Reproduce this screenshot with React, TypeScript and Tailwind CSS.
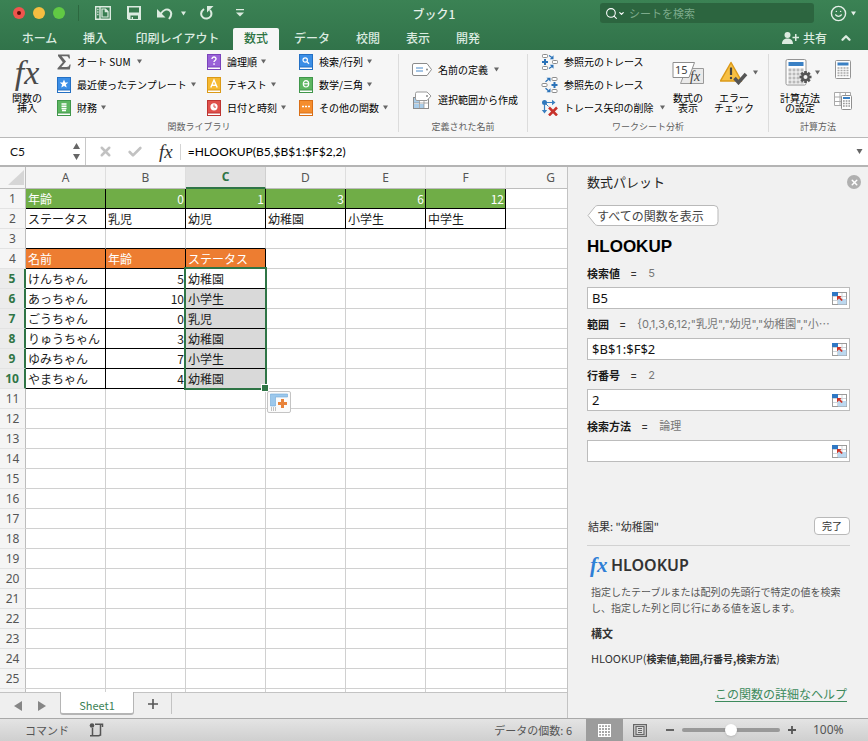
import React, { useState } from 'react';
import { ChevronDown, ChevronUp, Search, X, Check, Smile } from 'lucide-react';

const COLUMNS = ['A', 'B', 'C', 'D', 'E', 'F', 'G'];

const CELLS: Record<number, string[]> = {
  1: ['年齢', '0', '1', '3', '6', '12'],
  2: ['ステータス', '乳児', '幼児', '幼稚園', '小学生', '中学生'],
  4: ['名前', '年齢', 'ステータス'],
  5: ['けんちゃん', '5', '幼稚園'],
  6: ['あっちゃん', '10', '小学生'],
  7: ['ごうちゃん', '0', '乳児'],
  8: ['りゅうちゃん', '3', '幼稚園'],
  9: ['ゆみちゃん', '7', '小学生'],
  10: ['やまちゃん', '4', '幼稚園'],
};

const TABS = [
  { label: 'ホーム', cls: 'w-[57px]' },
  { label: '挿入', cls: 'w-[54px]' },
  { label: '印刷レイアウト', cls: 'w-[111px]' },
  { label: '数式', cls: 'w-[46px]' },
  { label: 'データ', cls: 'w-[66px]' },
  { label: '校閲', cls: 'w-[46px]' },
  { label: '表示', cls: 'w-[54px]' },
  { label: '開発', cls: 'w-[46px]' },
];

const Caret = ({ className = '' }: { className?: string }) => (
  <svg viewBox="0 0 6 5" className={`w-[5px] h-[5px] shrink-0 fill-[#666] ${className}`}>
    <path d="M0 0h6L3 5z" />
  </svg>
);

const FxIcon = ({ className = '' }: { className?: string }) => (
  <span aria-hidden="true" className={`font-['Liberation_Serif',serif] italic leading-none ${className}`}>
    fx
  </span>
);

const BookIcon = ({ color, edge, children }: { color: string; edge: string; children: React.ReactNode }) => (
  <svg viewBox="0 0 14 16" className="w-[14px] h-4 shrink-0">
    <rect x="0.5" y="0.5" width="13" height="15" fill="#fff" stroke={edge} />
    <rect x="0.5" y="0.5" width="13" height="12.5" fill={color} stroke={edge} />
    {children}
  </svg>
);

const SigmaIcon = () => (
  <svg viewBox="0 0 14 16" className="w-[14px] h-4 shrink-0">
    <path d="M1 .5h11.5l.5 4h-1.2c-.4-1.700-1-2.300-2.800-2.300H4.600L9 7.600 4.300 13h5.200c1.800 0 2.600-.8 3.100-2.500h1.100l-.9 5H.5v-1.300l5.300-6L1 2z" fill="#666" />
  </svg>
);

const StarIcon = () => (
  <BookIcon color="#3b8ee6" edge="#2470c4">
    <path d="M7 2.500l1.200 2.900 3.100.2-2.400 2 .8 3L7 9 4.300 10.600l.8-3-2.400-2 3.100-.2z" fill="#fff" />
  </BookIcon>
);

const CoinsIcon = () => (
  <BookIcon color="#5cb560" edge="#40964a">
    <path d="M4.500 4h5M4.500 6.300h5M4.500 8.600h5M5 10.500h4" stroke="#fff" strokeWidth="1.500" />
  </BookIcon>
);

const LogicIcon = () => (
  <BookIcon color="#9a62d8" edge="#7a43bb">
    <path d="M5 5c0-2.800 4.200-2.600 4 0-.1 1.400-2 1.500-2 3" fill="none" stroke="#fff" strokeWidth="1.400" />
    <rect x="6.300" y="9.300" width="1.500" height="1.500" fill="#fff" />
  </BookIcon>
);

const TextIcon = () => (
  <BookIcon color="#f6b932" edge="#db9a17">
    <path d="M3.800 10.500L7 3l3.200 7.500M5 8.200h4" fill="none" stroke="#fff" strokeWidth="1.400" />
  </BookIcon>
);

const ClockIcon = () => (
  <BookIcon color="#e0514c" edge="#bd3532">
    <circle cx="7" cy="6.800" r="3.600" fill="#fff" />
    <path d="M7 4.500v2.600h2" fill="none" stroke="#e0514c" />
  </BookIcon>
);

const LookupIcon = () => (
  <BookIcon color="#3b8ee6" edge="#2470c4">
    <circle cx="6.200" cy="6" r="2.200" fill="none" stroke="#fff" strokeWidth="1.200" />
    <path d="M8 7.800l2 2" stroke="#fff" strokeWidth="1.300" />
  </BookIcon>
);

const ThetaIcon = () => (
  <BookIcon color="#5cb560" edge="#40964a">
    <ellipse cx="7" cy="6.800" rx="2.700" ry="3.200" fill="none" stroke="#fff" strokeWidth="1.200" />
    <path d="M4.500 6.800h5" stroke="#fff" strokeWidth="1.200" />
  </BookIcon>
);

const MoreIcon = () => (
  <BookIcon color="#f58d2d" edge="#d96f17">
    <path d="M3 6.500h2M6 6.500h2M9 6.500h2" stroke="#fff" strokeWidth="1.600" />
  </BookIcon>
);

const TagIcon = () => (
  <svg viewBox="0 0 20 13" className="w-5 h-[13px] shrink-0">
    <path d="M2 .5h13l4.500 6-4.500 6H2A1.500 1.500 0 0 1 .5 11V2A1.500 1.500 0 0 1 2 .5z" fill="#fff" stroke="#8b8b8b" />
    <path d="M4 5h7M4 8h7" stroke="#4a8ac9" />
    <circle cx="15" cy="6.500" r="1" fill="#888" />
  </svg>
);

const SelectionTagIcon = () => (
  <svg viewBox="0 0 20 18" className="w-5 h-[18px] shrink-0">
    <rect x="1.500" y="6.500" width="15" height="11" fill="#fff" stroke="#8b8b8b" />
    <path d="M2 7h5v5H2zM2 13h5v4H2zM8 13h4v4H8z" fill="#a9cdea" />
    <path d="M2 12h14M7.500 7v10M12 7v10" stroke="#8b8b8b" strokeWidth=".7" />
    <path d="M5 1h10l4 4-4 4.500H5A1.500 1.500 0 0 1 3.500 8V2.500A1.500 1.500 0 0 1 5 1z" fill="#fff" stroke="#999" />
    <circle cx="15" cy="5" r="1" fill="#888" />
  </svg>
);

const PrecedentsIcon = () => (
  <svg viewBox="0 0 17 16" className="w-[17px] h-4 shrink-0">
    <g fill="#fff" stroke="#8b8b8b">
      <rect x="1.500" y=".5" width="5" height="3" rx=".8" />
      <rect x="1.500" y="12.500" width="5" height="3" rx=".8" />
      <rect x="11.500" y="6.500" width="5" height="3" rx=".8" />
    </g>
    <path d="M4 5v6M1 8h6" stroke="#2a72b8" strokeWidth="2" />
    <path d="M8 1.500l3 2M8 14.500l3-2" stroke="#2a72b8" strokeWidth="1.300" />
    <path d="M12.500 1.200v4H8.800zM12.500 14.800v-4H8.800z" fill="#2a72b8" />
  </svg>
);

const DependentsIcon = () => (
  <svg viewBox="0 0 17 16" className="w-[17px] h-4 shrink-0">
    <g fill="#fff" stroke="#8b8b8b">
      <rect x="11" y=".5" width="5" height="3" rx=".8" />
      <rect x="11" y="12.500" width="5" height="3" rx=".8" />
      <rect x="1" y="6.500" width="5" height="3" rx=".8" />
    </g>
    <path d="M13.500 5v6M10.500 8h6" stroke="#2a72b8" strokeWidth="2" />
    <path d="M4.500 4.800l3-2.500M4.500 11.200l3 2.500" stroke="#2a72b8" strokeWidth="1.300" />
    <path d="M5.500.800h4v4zM5.500 15.200h4v-4z" fill="#2a72b8" />
  </svg>
);

const RemoveArrowsIcon = () => (
  <svg viewBox="0 0 17 17" className="w-[17px] h-[17px] shrink-0">
    <path d="M3.500 3.500h8M3.500 3.500v8" stroke="#3a80c0" strokeWidth="1.200" />
    <path d="M11 .8l3.500 2.700L11 6.200zM.8 11l2.700 3.500L6.200 11z" fill="#3a80c0" />
    <path d="M4 4l3.500 3.500" stroke="#3a80c0" />
    <circle cx="3.500" cy="3.500" r="2.500" fill="#2f78bd" />
    <path d="M8 8.500l8 8M16 8.500l-8 8" stroke="#c8322b" strokeWidth="2.500" />
  </svg>
);

const ShowFormulasIcon = () => (
  <svg viewBox="0 0 32 23" className="w-8 h-[23px]">
    <path d="M14.500 6.500h17v15H8.500z" fill="#eaeaea" stroke="#9a9a9a" strokeLinejoin="round" />
    <path d="M1 .5h21.500l-5.500 15H1z" fill="#fff" stroke="#8e8e8e" strokeLinejoin="round" />
    <text x="3" y="12" fontSize="11" fill="#444" fontFamily="Noto Sans">15</text>
    <text x="18" y="19" fontSize="14" fontStyle="italic" fill="#444" fontFamily="Liberation Serif">fx</text>
  </svg>
);

const ErrorCheckIcon = () => (
  <svg viewBox="0 0 28 24" className="w-7 h-6">
    <path d="M11 1.500L21.500 20h-21z" fill="#f7c044" stroke="#dc9a1a" strokeWidth="1.500" strokeLinejoin="round" />
    <path d="M11 6.500v7.500" stroke="#444" strokeWidth="2.200" />
    <circle cx="11" cy="17" r="1.200" fill="#444" />
    <path d="M14.500 17l4 4.500 7.500-8.500" fill="none" stroke="#555" strokeWidth="3.500" />
  </svg>
);

const CalculatorIcon = () => (
  <svg viewBox="0 0 16 19" className="w-4 h-[19px]">
    <rect x=".5" y=".5" width="15" height="18" rx="1" fill="#fdfdfd" stroke="#949494" />
    <rect x="2.500" y="2.500" width="11" height="3" fill="#3a80c4" />
    <path d="M2.500 8h11M2.500 10.500h11M2.500 13h11M2.500 15.500h11" stroke="#a8a8a8" strokeWidth="1.700" strokeDasharray="2 1" />
  </svg>
);

const GEAR_ANGLES = [0, 45, 90, 135];

const CalcOptionsIcon = () => (
  <svg viewBox="0 0 27 27" className="w-[27px] h-[27px]">
    <rect x="1" y=".5" width="20" height="25.500" rx="1.500" fill="#fdfdfd" stroke="#949494" />
    <rect x="3.500" y="3" width="15" height="4" fill="#3a80c4" />
    <path d="M3.500 11h15M3.500 15h15M3.500 19h15M3.500 23h15" stroke="#b9b9b9" strokeWidth="2.800" strokeDasharray="3 1" />
    {GEAR_ANGLES.map((angle) => (
      <path key={angle} d="M20.500 12v12" stroke="#555" strokeWidth="2.600" transform={`rotate(${angle} 20.500 18)`} />
    ))}
    <circle cx="20.500" cy="18" r="3.200" fill="#f5f5f5" stroke="#555" strokeWidth="2.400" />
  </svg>
);

const CalcSheetIcon = () => (
  <svg viewBox="0 0 18 18" className="w-[18px] h-[18px]">
    <path d="M.5.500h16v13H.5zM.5 5h16M.5 9.500h16M6 .5v13M11.500.500v13" fill="#fff" stroke="#a9a9a9" />
    <rect x="7.500" y="3.500" width="10" height="14" rx="1" fill="#fff" stroke="#8f8f8f" />
    <rect x="9" y="5" width="7" height="2" fill="#3a80c4" />
    <path d="M9 9h7M9 11.500h7M9 14h7" stroke="#999" strokeWidth="1.500" strokeDasharray="1.700 1" />
  </svg>
);

const PickRangeIcon = () => (
  <svg viewBox="0 0 15 13" className="w-[15px] h-[13px]">
    <rect x=".5" y=".5" width="14" height="12" fill="#fff" stroke="#9b9b9b" />
    <path d="M1 4.500h13M1 8.500h13M5.500 1v11M10 1v11" stroke="#cfd5da" />
    <rect x="0" y="0" width="6" height="4" fill="#2f78c4" />
    <rect x="6" y="7" width="8.500" height="5.500" fill="#bcd8ef" />
    <path d="M5 4h4.500L8.300 5.300l2.500 2.600-1.300 1.200L7 6.600 5 8.300z" fill="#cb3428" />
  </svg>
);

const MenuItem = ({ icon, label, caret = true, far = false }: { icon: React.ReactNode; label: string; caret?: boolean; far?: boolean }) => (
  <button className="flex items-center gap-[6px] h-[23px] whitespace-nowrap">
    {icon}
    <span>{label}</span>
    {caret && <Caret className={far ? 'ml-0' : '-ml-[2px]'} />}
  </button>
);

// a caption broken over two lines, for the large ribbon buttons
const Caption = ({ lines }: { lines: string[] }) => (
  <span className="flex flex-col items-center h-5 whitespace-nowrap">
    {lines.map((line) => (
      <span key={line} className="h-[10px]">{line}</span>
    ))}
  </span>
);

const GroupLabel = ({ children }: { children: React.ReactNode }) => (
  <div className="text-center text-[9px] leading-4 text-[#5e5e5e] whitespace-nowrap">{children}</div>
);

const TitleBar: React.FC = () => (
  <div className="relative flex items-center h-[26px] pl-[13px] pr-3">
    <div className="flex gap-2">
      <button aria-label="閉じる" className="w-3 h-3 rounded-full bg-[#f0544d] flex items-center justify-center">
        <span className="w-1 h-1 rounded-full bg-[#5c0d08]" />
      </button>
      <button aria-label="しまう" className="w-3 h-3 rounded-full bg-[#f6be41]" />
      <button aria-label="拡大" className="w-3 h-3 rounded-full bg-[#61c944]" />
    </div>
    <div className="w-px h-4 ml-[13px] bg-[#2c683f]" />
    <div className="flex items-center ml-4 text-[#dcebe0]">
      <button aria-label="テンプレート">
        <svg viewBox="0 0 16 14" className="w-4 h-[14px]" fill="none" stroke="currentColor" strokeWidth="1.400">
          <path d="M.7.700h14.600v12.600H.7zM5 1v12" />
          <path d="M2.200 3.500h1.300M2.200 6h1.300M2.200 8.500h1.300" />
          <path d="M7 3h3.500L13 5.500V11H7zM10.300 3v2.700H13" strokeWidth="1.200" />
        </svg>
      </button>
      <button aria-label="保存" className="ml-4">
        <svg viewBox="0 0 14 14" className="w-[14px] h-[14px]">
          <path d="M0 0h14v14H1.500L0 12.500z" fill="currentColor" />
          <path d="M2 1.500h10v5H2zM3.500 9.500H11V13H6v-2H4.700v2H3.500z" fill="#387a4e" />
        </svg>
      </button>
      <button aria-label="元に戻す" className="flex items-center gap-2 ml-4">
        <svg viewBox="0 0 16 13" className="w-4 h-[13px]">
          <path d="M0 2v8.500h8.500z" fill="currentColor" />
          <path d="M3.500 7C7 2 10.500 1.500 12.700 3.500c2.200 2 2 5-.7 8.500" fill="none" stroke="currentColor" strokeWidth="2" />
        </svg>
        <Caret className="fill-[#dcebe0]" />
      </button>
      <button aria-label="やり直し" className="ml-[14px]">
        <svg viewBox="0 0 14 14" className="w-[14px] h-[14px]">
          <path d="M4 3C.5 5.500.300 9.500 3 11.500c2.500 1.800 6 1.300 7.700-1.200C12 8 11.500 6 10 4" fill="none" stroke="currentColor" strokeWidth="2" />
          <path d="M7 0h6.500L7 6.500z" fill="currentColor" />
        </svg>
      </button>
      <button aria-label="カスタマイズ" className="ml-[22px]">
        <svg viewBox="0 0 8 8" className="w-2 h-2" fill="currentColor">
          <path d="M0 0h8v1.300H0zM0 3.500h8L4 7.500z" />
        </svg>
      </button>
    </div>
    <h1 className="absolute left-1/2 -translate-x-1/2 top-[5px] text-[12px] leading-[18px] font-medium text-[#e6f0e9]">ブック1</h1>
    <label className="flex items-center ml-auto w-[214px] h-5 pl-[5px] rounded-[3px] bg-[#2c653f] text-white">
      <Search size={13} strokeWidth={2} />
      <ChevronDown size={7} strokeWidth={4} />
      <input
        aria-label="シートを検索"
        placeholder="シートを検索"
        className="flex-1 min-w-0 ml-1 bg-transparent text-[11px] leading-4 outline-none placeholder:text-[#7cab8b]"
      />
    </label>
    <button aria-label="フィードバック" className="flex items-center gap-1 ml-4 text-[#e6f0e9]">
      <Smile size={17} strokeWidth={2} />
      <Caret className="fill-[#e6f0e9]" />
    </button>
  </div>
);

const TabBar: React.FC = () => (
  <div className="flex items-end h-6 pl-[11px] text-[12px] font-medium text-[#dcebe0]">
    <nav className="flex items-end h-full">
      {TABS.map((tab) => (
        <button
          key={tab.label}
          className={`h-[22px] pb-[2px] leading-5 whitespace-nowrap ${tab.cls} ${
            tab.label === '数式' ? 'bg-[#f6f6f6] text-[#2d7343] rounded-t-[2px]' : ''
          }`}
        >
          {tab.label}
        </button>
      ))}
    </nav>
    <div className="flex items-center gap-3 h-6 ml-auto mr-[15px]">
      <button className="flex items-center gap-1 leading-5">
        <svg viewBox="0 0 17 12" className="w-[17px] h-3" fill="currentColor">
          <circle cx="5.500" cy="3" r="3" />
          <path d="M0 12c0-4 2.500-5.500 5.500-5.500S11 8 11 12zM13 2h1.500v2.800h2.500v1.500h-2.500V9H13V6.300h-2.500V4.800H13z" />
        </svg>
        共有
      </button>
      <button aria-label="リボンを折りたたむ">
        <ChevronUp size={14} strokeWidth={4} />
      </button>
    </div>
  </div>
);

const Ribbon: React.FC = () => (
  <div className="flex h-[88px] border-b border-[#b9b9b9] bg-[#f6f6f6] text-[10px] leading-[10px] text-black">
    <section className="flex flex-col w-[398px] shrink-0">
      <div className="flex h-[69px]">
        <button className="flex flex-col items-center w-[54px] pt-[6px]">
          <FxIcon className="h-[37px] text-[34px] text-[#4a4a4a]" />
          <Caption lines={['関数の', '挿入']} />
        </button>
        <div className="w-[150px] pl-[3px]">
          <MenuItem icon={<SigmaIcon />} label="オート SUM" far />
          <MenuItem icon={<StarIcon />} label="最近使ったテンプレート" />
          <MenuItem icon={<CoinsIcon />} label="財務" />
        </div>
        <div className="w-[92px] pl-[3px]">
          <MenuItem icon={<LogicIcon />} label="論理順" />
          <MenuItem icon={<TextIcon />} label="テキスト" />
          <MenuItem icon={<ClockIcon />} label="日付と時刻" />
        </div>
        <div className="pl-[3px]">
          <MenuItem icon={<LookupIcon />} label="検索/行列" />
          <MenuItem icon={<ThetaIcon />} label="数学/三角" />
          <MenuItem icon={<MoreIcon />} label="その他の関数" />
        </div>
      </div>
      <GroupLabel>関数ライブラリ</GroupLabel>
    </section>
    <div className="w-px h-[78px] mt-1 bg-[#dcdcdc]" />
    <section className="flex flex-col w-[128px] shrink-0">
      <div className="flex flex-col gap-[7px] h-[69px] pl-[13px] pt-2">
        <MenuItem icon={<TagIcon />} label="名前の定義" far />
        <MenuItem icon={<SelectionTagIcon />} label="選択範囲から作成" caret={false} />
      </div>
      <GroupLabel>定義された名前</GroupLabel>
    </section>
    <div className="w-px h-[78px] mt-1 bg-[#dcdcdc]" />
    <section className="flex flex-col w-[240px] shrink-0">
      <div className="flex h-[69px] pl-[13px]">
        <div className="w-[127px]">
          <MenuItem icon={<PrecedentsIcon />} label="参照元のトレース" caret={false} />
          <MenuItem icon={<DependentsIcon />} label="参照先のトレース" caret={false} />
          <MenuItem icon={<RemoveArrowsIcon />} label="トレース矢印の削除" far />
        </div>
        <button className="flex flex-col items-center w-10 pt-3 gap-2">
          <ShowFormulasIcon />
          <Caption lines={['数式の', '表示']} />
        </button>
        <button className="relative flex flex-col items-center w-[52px] pt-[11px] gap-2">
          <ErrorCheckIcon />
          <Caption lines={['エラー', 'チェック']} />
          <Caret className="absolute right-[2px] top-5" />
        </button>
      </div>
      <GroupLabel>ワークシート分析</GroupLabel>
    </section>
    <div className="w-px h-[78px] mt-1 bg-[#dcdcdc]" />
    <section className="flex flex-col w-[98px] shrink-0">
      <div className="flex h-[69px]">
        <button className="relative flex flex-col items-center w-[62px] pt-[9px] gap-[7px]">
          <span className="pr-1"><CalcOptionsIcon /></span>
          <Caption lines={['計算方法', 'の設定']} />
          <Caret className="absolute right-[11px] top-5" />
        </button>
        <div className="flex flex-col items-center gap-[13px] w-6 pt-[10px]">
          <button aria-label="再計算実行"><CalculatorIcon /></button>
          <button aria-label="シート再計算"><CalcSheetIcon /></button>
        </div>
      </div>
      <GroupLabel>計算方法</GroupLabel>
    </section>
  </div>
);

const FormulaBar: React.FC = () => (
  <div className="flex items-center h-[29px] border-b-2 border-[#b4b4b4] bg-white font-['Lato','Noto_Sans_CJK_JP',sans-serif]">
    <div className="flex items-center w-[86px] h-full pl-[10px] pr-[5px] border-r border-[#c8c8c8]">
      <input aria-label="名前ボックス" defaultValue="C5" className="flex-1 min-w-0 text-[12px] leading-4 text-[#111] outline-none" />
      <button aria-label="名前一覧">
        <svg viewBox="0 0 7 17" className="w-[7px] h-[17px] fill-[#666]">
          <path d="M0 6h7L3.500 0zM0 11h7l-3.500 6z" />
        </svg>
      </button>
    </div>
    <button aria-label="キャンセル" className="ml-3 text-[#c2c2c2]"><X size={15} strokeWidth={4} /></button>
    <button aria-label="入力" className="ml-[14px] text-[#c2c2c2]"><Check size={16} strokeWidth={4} /></button>
    <button aria-label="関数の挿入" className="flex ml-4"><FxIcon className="text-[19px] text-[#333]" /></button>
    <div className="w-px h-4 mx-[7px] bg-[#d4d4d4]" />
    <input
      aria-label="数式"
      defaultValue="=HLOOKUP(B5,$B$1:$F$2,2)"
      className="flex-1 min-w-0 text-[12px] leading-4 text-black outline-none"
    />
    <button aria-label="数式バーを広げる" className="mr-[5px]"><Caret className="w-[7px]" /></button>
  </div>
);

const cellClass = (row: number, col: number) => {
  if (row === 1 && col < 6) return 'bg-[#70ad47] text-white border-black';
  if (row === 2 && col < 6) return 'border-black';
  if (row === 4 && col < 3) return 'bg-[#ed7d31] text-white border-black';
  if (row >= 5 && row <= 10 && col < 3) {
    return col === 2 && row > 5 ? 'bg-[#d9d9d9] border-black' : 'border-black';
  }
  if (row === 3 && col < 3) return 'border-r-[#d0d0d0] border-b-black';
  return 'border-[#d0d0d0]';
};

const Sheet: React.FC = () => (
  <div className="relative flex-1 min-h-0 overflow-hidden bg-white">
    <table className="table-fixed w-[596px] border-separate border-spacing-0 text-[12px] leading-[18px] text-[#1a1a1a]">
      <colgroup>
        <col className="w-[26px]" />
        {COLUMNS.map((c) => <col key={c} className={c === 'G' ? 'w-[90px]' : 'w-20'} />)}
      </colgroup>
      <thead>
        <tr className="h-[22px] bg-[#f5f5f5] font-['Noto_Sans',sans-serif] text-[#555]">
          <th className="p-0 border-r border-b border-[#bdbdbd]">
            <svg viewBox="0 0 16 15" className="w-4 h-[15px] ml-2 fill-[#d6d6d6]"><path d="M16 0v15H0z" /></svg>
          </th>
          {COLUMNS.map((c) => (
            <th
              key={c}
              className={`p-0 border-r ${
                c === 'C'
                  ? 'bg-[#e2e2e2] border-b-2 border-r-[#cfcfcf] border-b-[#2f7546] text-[#2f7546] font-bold'
                  : 'border-b border-r-[#dedede] border-b-[#bdbdbd] font-normal'
              }`}
            >
              {c}
            </th>
          ))}
        </tr>
      </thead>
      <tbody>
        {Array.from({ length: 26 }, (_, i) => i + 1).map((row) => {
          const active = row >= 5 && row <= 10;
          return (
            <tr key={row} className="h-5">
              <th
                className={`h-5 p-0 border-b border-b-[#e3e3e3] font-['Noto_Sans',sans-serif] ${
                  active
                    ? 'bg-[#ececec] text-[#2f7546] font-bold border-r-2 border-r-[#2f7546]'
                    : 'bg-[#f5f5f5] text-[#555] font-normal border-r border-r-[#bdbdbd]'
                }`}
              >
                {row < 26 ? row : ''}
              </th>
              {COLUMNS.map((c, col) => {
                const value = CELLS[row]?.[col] ?? '';
                const numeric = /^\d+$/.test(value);
                return (
                  <td
                    key={c}
                    className={`h-5 py-0 border-r border-b whitespace-nowrap ${numeric ? 'text-right px-px' : 'px-[2px]'} ${cellClass(row, col)}`}
                  >
                    {value}
                  </td>
                );
              })}
            </tr>
          );
        })}
      </tbody>
    </table>
    {/* selection frame over C5:C10, with its fill handle */}
    <div className="absolute left-[184px] top-[100px] w-[83px] h-[123px] border-2 border-[#2f7546] pointer-events-none">
      <span className="absolute -right-[3px] -bottom-[3px] w-[6px] h-[6px] bg-[#2f7546] outline outline-white" />
    </div>
    <button
      aria-label="オートフィル オプション"
      className="absolute left-[267px] top-[224px] flex items-center justify-center w-6 h-[22px] rounded-[2px] border border-[#c4c4c4] bg-[#fbfbfb]"
    >
      <svg viewBox="0 0 19 18" className="w-[19px] h-[18px]">
        <path d="M.5 1h17v3h-12v9h-5z" fill="#9cc8ec" stroke="#6faada" strokeWidth=".6" />
        <path d="M12.500 6v9M8 10.500h9" stroke="#e8833a" strokeWidth="3" />
        <path d="M1 15h5M1 17h5" stroke="#888" strokeDasharray="1 1" />
      </svg>
    </button>
  </div>
);

const SheetTabs: React.FC = () => (
  <div className="flex h-[26px] border-t border-[#c3c3c3] bg-[#efefef]">
    <div className="flex items-center gap-4 w-[60px] pl-[14px]">
      <button aria-label="前のシート">
        <svg viewBox="0 0 8 10" className="w-2 h-[10px] fill-[#868686]"><path d="M8 0v10L0 5z" /></svg>
      </button>
      <button aria-label="次のシート">
        <svg viewBox="0 0 8 10" className="w-2 h-[10px] fill-[#868686]"><path d="M0 0v10l8-5z" /></svg>
      </button>
    </div>
    <button className="w-[74px] h-[23px] -mt-px pt-[5px] rounded-b-[3px] border border-t-0 border-b-2 border-[#b5b5b5] bg-white text-[11px] leading-4 text-[#3b8155]">
      Sheet1
    </button>
    <button aria-label="シートを追加" className="flex items-center justify-center w-[38px] h-[21px] border-r border-[#c3c3c3]">
      <svg viewBox="0 0 10 10" className="w-[10px] h-[10px]"><path d="M5 0v10M0 5h10" stroke="#555" strokeWidth="1.600" /></svg>
    </button>
  </div>
);

const Argument = ({ id, label, result, value }: { id: string; label: string; result: string; value: string }) => (
  <div className="mb-[7px]">
    <div className="flex h-[22px] text-[11px] leading-4 whitespace-nowrap">
      <label htmlFor={id} className="font-bold text-[#1a1a1a]">{label}</label>
      <span className="ml-[10px] font-['Inter',sans-serif] text-[#333]">=</span>
      <span className="ml-[11px] font-['Inter','Noto_Sans_CJK_JP',sans-serif] text-[#777]">{result}</span>
    </div>
    <div className="flex items-center h-[22px] pl-1 pr-[2px] border border-[#bcbcbc] bg-white">
      <input id={id} defaultValue={value} className="flex-1 min-w-0 font-['Noto_Sans',sans-serif] text-[13px] leading-5 text-[#111] outline-none" />
      <button aria-label={`${label}のセル範囲を選択`}><PickRangeIcon /></button>
    </div>
  </div>
);

const FormulaPalette: React.FC = () => (
  <aside className="flex flex-col w-[301px] shrink-0 pl-[19px] pr-[18px] pt-[6px] border-l border-[#c3c3c3] bg-[#f1f1f1]">
    <div className="flex items-center justify-between -mr-[11px] text-[13px] leading-[18px] text-[#222]">
      <h2>数式パレット</h2>
      <button aria-label="閉じる" className="flex items-center justify-center w-[14px] h-[14px] rounded-full bg-[#b0b0b0] text-white">
        <X size={9} strokeWidth={4} />
      </button>
    </div>
    <button className="relative self-start w-[132px] h-[21px] mt-[14px] pl-[10px] text-left text-[12px] leading-[21px] text-[#444] whitespace-nowrap">
      <svg viewBox="0 0 132 22" className="absolute inset-0 w-[132px] h-[22px]">
        <path d="M11 .5h116a4 4 0 0 1 4 4v12a4 4 0 0 1-4 4H11c-2 0-3-1-4-2.500L1 10.500 7 3c1-1.500 2-2.500 4-2.500z" fill="#fff" stroke="#b9b9b9" />
      </svg>
      <span className="relative">すべての関数を表示</span>
    </button>
    <h3 className="mt-[11px] mb-2 font-['Liberation_Sans',sans-serif] text-[17px] leading-5 font-bold text-black">HLOOKUP</h3>
    <Argument id="lookup" label="検索値" result="5" value="B5" />
    <Argument id="range" label="範囲" result={'{0,1,3,6,12;"乳児","幼児","幼稚園","小⋯'} value="$B$1:$F$2" />
    <Argument id="row" label="行番号" result="2" value="2" />
    <Argument id="match" label="検索方法" result="論理" value="" />
    <div className="flex items-center justify-between h-5 mt-[47px] text-[11px] leading-4 text-[#333]">
      <span className="pl-px">結果: "幼稚園"</span>
      <button className="w-9 h-[18px] rounded-[4px] border border-[#b9b9b9] bg-white text-[10px]">完了</button>
    </div>
    <div className="h-px mt-[9px] bg-[#d2d2d2]" />
    <div className="flex items-center gap-1 h-5 mt-[9px] pl-[3px]">
      <FxIcon className="w-[17px] text-[21px] text-[#2f7fd6] font-bold" />
      <h3 className="font-['Noto_Sans',sans-serif] text-[16px] leading-5 font-semibold text-[#333]">HLOOKUP</h3>
    </div>
    <p className="mt-[9px] pl-[4px] -mr-1 text-[10px] leading-4 text-[#555]">
      指定したテーブルまたは配列の先頭行で特定の値を検索し、指定した列と同じ行にある値を返します。
    </p>
    <h4 className="mt-[9px] pl-[4px] text-[11px] leading-4 font-bold text-[#333]">構文</h4>
    <p className="mt-[9px] pl-[4px] text-[10px] leading-4 text-[#333] whitespace-nowrap">
      <span className="text-[11px]">HLOOKUP(</span><b>検索値,範囲,行番号,検索方法</b>)
    </p>
    <a href="#help" className="self-end mt-[19px] mr-[3px] text-[12px] leading-4 text-[#3d8a5c] underline underline-offset-2">
      この関数の詳細なヘルプ
    </a>
  </aside>
);

const StatusBar: React.FC = () => {
  const [zoom, setZoom] = useState(50);

  return (
    <footer className="flex items-center h-[23px] border-t border-[#a9a9a9] bg-linear-to-b from-[#e4e4e4] to-[#cfcfcf] text-[11px] leading-4 text-[#555]">
      <span className="pl-[25px]">コマンド</span>
      <button aria-label="マクロの記録" className="ml-5">
        <svg viewBox="0 0 15 14" className="w-[15px] h-[14px]" fill="none" stroke="#555" strokeWidth="1.500">
          <path d="M6 1.200h7.500V4M11.500 1.500v11.300M1 12.800h8.500c1.500 0 2-1 2-2M3.500 5v7" />
          <circle cx="3" cy="2.500" r="2.300" fill="#555" stroke="none" />
        </svg>
      </button>
      <span className="ml-auto mr-[14px]">データの個数: 6</span>
      <button aria-label="標準表示" className="flex items-center justify-center w-[37px] h-full bg-[#9c9c9c]">
        <svg viewBox="0 0 13 13" className="w-[13px] h-[13px]" fill="none" stroke="#fff" strokeWidth="1.200">
          <path d="M.6.600h11.800v11.800H.6zM.6 3.500h11.800M.6 6.500h11.800M.6 9.500h11.800M3.500.600v11.800M6.500.600v11.800M9.500.600v11.800" />
        </svg>
      </button>
      <button aria-label="ページ レイアウト" className="ml-[10px]">
        <svg viewBox="0 0 14 13" className="w-[14px] h-[13px]" fill="none" stroke="#666" strokeWidth="1.200">
          <path d="M.6.600h12.800v11.800H.6zM3 2.500h8v8H3zM5 4.500h4M5 6.500h4M5 8.500h4" />
        </svg>
      </button>
      <button aria-label="縮小" className="ml-[19px]">
        <svg viewBox="0 0 9 9" className="w-2 h-2"><path d="M0 4.500h9" stroke="#555" strokeWidth="2" /></svg>
      </button>
      <input
        type="range"
        aria-label="ズーム"
        value={zoom}
        onChange={(e) => setZoom(Number(e.target.value))}
        className="appearance-none w-[98px] h-1 mx-2 rounded-full bg-[#999] [&::-webkit-slider-thumb]:appearance-none [&::-webkit-slider-thumb]:w-3 [&::-webkit-slider-thumb]:h-3 [&::-webkit-slider-thumb]:rounded-full [&::-webkit-slider-thumb]:bg-white [&::-webkit-slider-thumb]:shadow"
      />
      <button aria-label="拡大">
        <svg viewBox="0 0 9 9" className="w-2 h-2"><path d="M0 4.500h9M4.500 0v9" stroke="#555" strokeWidth="2" /></svg>
      </button>
      <span className="w-[72px] pl-[17px] font-['Noto_Sans',sans-serif] text-[12px]">100%</span>
    </footer>
  );
};

const App: React.FC = () => {
  return (
    <div className="flex flex-col h-screen overflow-hidden bg-[#f1f1f1] font-['Noto_Sans_CJK_JP',sans-serif]">
      <header className="shrink-0 bg-linear-to-b from-[#3b8254] to-[#31734a]">
        <TitleBar />
        <TabBar />
      </header>
      <Ribbon />
      <FormulaBar />
      <main className="flex flex-1 min-h-0">
        <div className="flex flex-col flex-1 min-w-0">
          <Sheet />
          <SheetTabs />
        </div>
        <FormulaPalette />
      </main>
      <StatusBar />
    </div>
  );
};

export default App;
